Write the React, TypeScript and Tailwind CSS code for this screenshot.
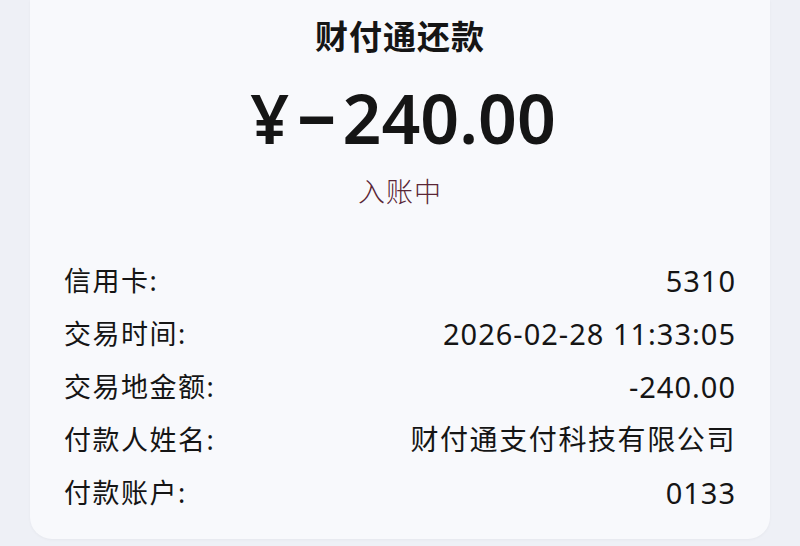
import React from "react";

const rows: { label: string; value: string; cjk?: boolean }[] = [
  { label: "信用卡:", value: "5310" },
  { label: "交易时间:", value: "2026-02-28 11:33:05" },
  { label: "交易地金额:", value: "-240.00" },
  { label: "付款人姓名:", value: "财付通支付科技有限公司", cjk: true },
  { label: "付款账户:", value: "0133" },
];

export default function App() {
  return (
    <div
      className="w-[800px] h-[546px] bg-[#eef0f6] px-[30px] pb-[7px] overflow-hidden"
      style={{ fontFamily: '"Noto Sans", "Noto Sans CJK SC", sans-serif' }}
    >
      <div className="h-full bg-[#f8f9fc] rounded-b-[22px] flex flex-col items-center text-[#151515] shadow-[0_1px_3px_rgba(0,0,0,0.04)]">
        <div className="mt-[17px] text-[33px] leading-[40px] font-bold tracking-[1px]">财付通还款</div>
        <div className="mt-[21px] pl-[6px] text-[68px] leading-[80px] font-semibold flex items-center">
          <span className="mr-[8px]">¥</span>
          <span className="mr-[6px] font-bold">−</span>
          <span>240.00</span>
        </div>
        <div className="mt-[18px] text-[27px] leading-[32px] font-light text-[#5a2636] tracking-[1px]">入账中</div>
        <div className="mt-[46px] w-full px-[34px] flex flex-col">
          {rows.map((r) => (
            <div key={r.label} className="h-[53px] flex items-center justify-between">
              <span className="text-[27px] leading-[53px] tracking-[1.5px]">{r.label}</span>
              <span
                className={
                  r.cjk
                    ? "text-[28px] leading-[53px] tracking-[1.6px]"
                    : "text-[29px] leading-[53px] tracking-[1px]"
                }
              >
                {r.value}
              </span>
            </div>
          ))}
        </div>
      </div>
    </div>
  );
}
